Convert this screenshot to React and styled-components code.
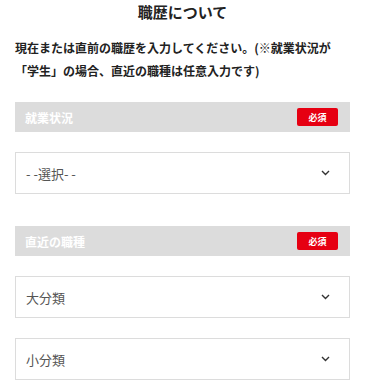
import React from 'react';
import styled, { createGlobalStyle } from 'styled-components';

const GlobalStyle = createGlobalStyle`
  body {
    margin: 0;
    background: #fff;
    font-family: "Noto Sans CJK JP", "Noto Sans", sans-serif;
    color: #222;
  }
`;

const Page = styled.div`
  width: 335px;
  padding: 0 17px 0 15px;
`;

const Title = styled.h2`
  margin: 0;
  font-size: 15px;
  line-height: 24px;
  font-weight: 700;
  text-align: center;
  color: #222;
`;

const Lead = styled.p`
  margin: 12px 0 20px;
  font-size: 12px;
  line-height: 23px;
  font-weight: 700;
  color: #222;
`;

const Field = styled.div`
  display: flex;
  flex-direction: column;
  gap: 20px;
  margin-bottom: ${props => props.spacing}px;
`;

const LabelBar = styled.div`
  display: flex;
  align-items: center;
  justify-content: space-between;
  height: 30px;
  padding: 0 12px 0 10px;
  background: #dcdcdc;
`;

const Label = styled.span`
  font-size: 12px;
  font-weight: 700;
  color: #fff;
`;

const Badge = styled.span`
  display: flex;
  align-items: center;
  justify-content: center;
  width: 41px;
  height: 18px;
  border-radius: 2px;
  background: #e60012;
  color: #fff;
  font-size: 9px;
  font-weight: 700;
`;

const Select = styled.div`
  display: flex;
  align-items: center;
  justify-content: space-between;
  box-sizing: border-box;
  height: 42px;
  padding: 0 19px 0 10px;
  border: 1px solid #dcdcdc;
  background: #fff;
`;

const Placeholder = styled.span`
  font-size: 13px;
  color: #555;
`;

const Chevron = () => (
  <svg width="9" height="6" viewBox="0 0 9 6">
    <path d="M1 1l3.5 3.5L8 1" fill="none" stroke="#333" strokeWidth="1.4" />
  </svg>
);

const Dropdown = ({ text }) => (
  <Select>
    <Placeholder>{text}</Placeholder>
    <Chevron />
  </Select>
);

const App = () => (
  <Page>
    <GlobalStyle />
    <Title>職歴について</Title>
    <Lead>
      現在または直前の職歴を入力してください。(※就業状況が
      <br />
      「学生」の場合、直近の職種は任意入力です)
    </Lead>
    <Field spacing={32}>
      <LabelBar>
        <Label>就業状況</Label>
        <Badge>必須</Badge>
      </LabelBar>
      <Dropdown text="- -選択- -" />
    </Field>
    <Field spacing={0}>
      <LabelBar>
        <Label>直近の職種</Label>
        <Badge>必須</Badge>
      </LabelBar>
      <Dropdown text="大分類" />
      <Dropdown text="小分類" />
    </Field>
  </Page>
);

export default App;
